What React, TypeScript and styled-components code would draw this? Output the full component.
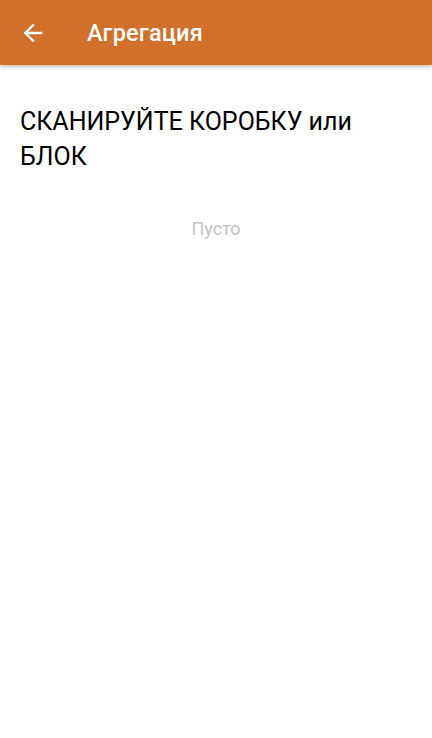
import styled, { createGlobalStyle } from "styled-components";

const GlobalStyle = createGlobalStyle`
  html, body {
    margin: 0;
    padding: 0;
    background: #ffffff;
  }
  body {
    font-family: Roboto, "Noto Sans", sans-serif;
  }
`;

const BackIcon = () => (
  <svg viewBox="0 0 24 24" width="28" height="28" fill="#ffffff">
    <path d="M20 11H7.83l5.59-5.59L12 4l-8 8 8 8 1.41-1.41L7.83 13H20v-2z" />
  </svg>
);

const App = () => {
  return (
    <Screen>
      <GlobalStyle />
      <AppBar>
        <BackButton aria-label="back">
          <BackIcon />
        </BackButton>
        <Title>Агрегация</Title>
      </AppBar>
      <Content>
        <Prompt>СКАНИРУЙТЕ КОРОБКУ или БЛОК</Prompt>
        <Empty>Пусто</Empty>
      </Content>
    </Screen>
  );
};

export default App;

const Screen = styled.div`
  width: 432px;
  min-height: 738px;
  background: #ffffff;
  display: flex;
  flex-direction: column;
`;
const AppBar = styled.header`
  height: 65px;
  background-color: #d0702a;
  display: flex;
  align-items: center;
  padding: 0 0 0 19px;
  box-shadow: 0 2px 4px rgba(0, 0, 0, 0.25);
  position: relative;
  z-index: 1;
`;
const BackButton = styled.div`
  width: 28px;
  height: 28px;
  display: flex;
  align-items: center;
  justify-content: center;
  svg {
    display: block;
  }
`;
const Title = styled.h1`
  margin: 0 0 0 40px;
  font-family: Roboto, sans-serif;
  font-weight: 500;
  font-size: 23.5px;
  color: #ffffff;
  letter-spacing: 0.2px;
`;
const Content = styled.main`
  padding: 39px 20px 0;
  display: flex;
  flex-direction: column;
`;
const Prompt = styled.h2`
  margin: 0;
  font-family: Roboto, sans-serif;
  font-weight: 400;
  font-size: 25px;
  line-height: 35px;
  color: #000000;
`;
const Empty = styled.div`
  margin-top: 44px;
  text-align: center;
  font-family: Roboto, sans-serif;
  font-size: 18px;
  color: #c4c4c4;
`;
